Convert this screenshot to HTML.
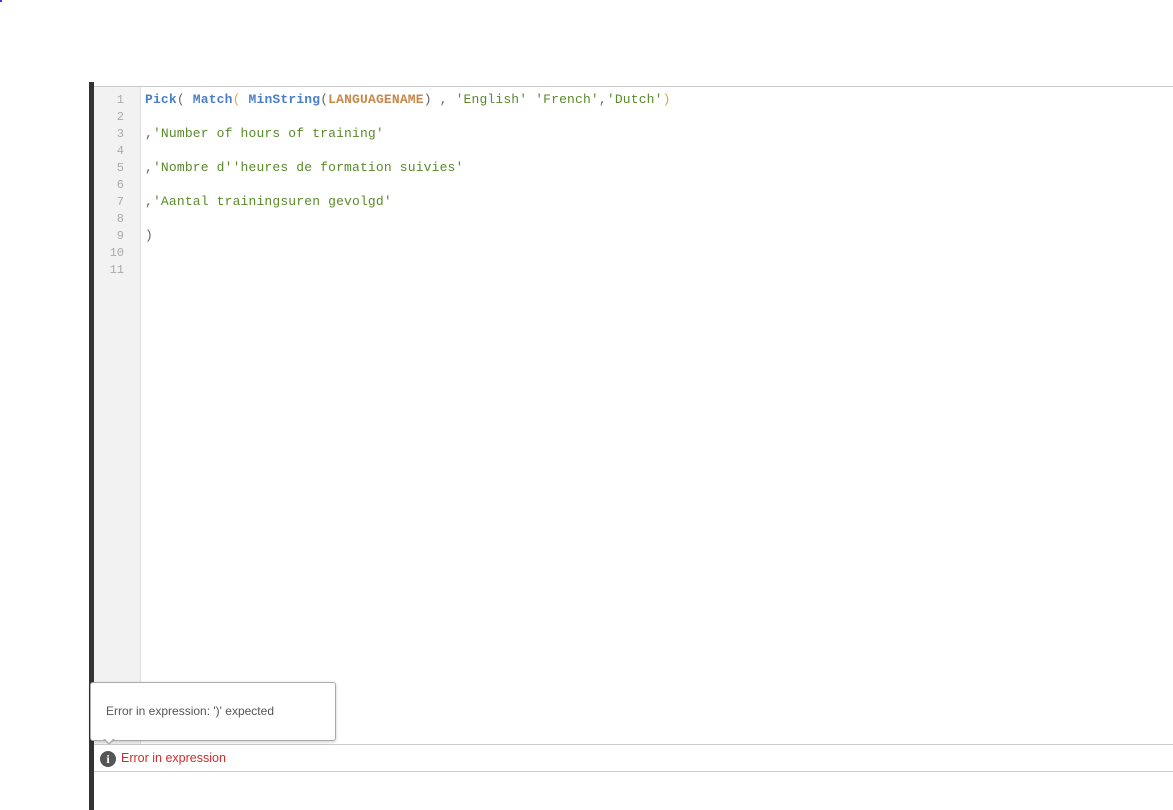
<!DOCTYPE html>
<html><head><style>
body{margin:0;width:1173px;height:810px;background:#fff;position:relative;overflow:hidden;font-family:"Liberation Sans",sans-serif}
.bar{position:absolute;left:89px;top:82px;width:5px;height:728px;background:#333}
.top{position:absolute;left:94px;top:86px;right:0;height:1px;background:#ccc}
.gut{position:absolute;left:94px;top:87px;width:46px;height:657px;background:#f2f2f2;border-right:1px solid #ddd}
.ln{position:absolute;left:94px;width:30px;text-align:right;font:12px "Liberation Mono",monospace;color:#aaa}
.code{position:absolute;left:145px;font:13px "Liberation Mono",monospace;letter-spacing:0.16px;white-space:pre;color:#5a8a2a}
.f{color:#4a7fc8;font-weight:bold}.p{color:#e8a14a}.v{color:#c8874a;font-weight:bold}.k{color:#666}
.tip{position:absolute;left:90px;top:682px;width:244px;height:57px;border:1px solid #aaa;border-radius:3px;background:#fff;box-shadow:0 1px 3px rgba(0,0,0,.2);font-size:12px;color:#555}
.bot{position:absolute;left:94px;top:744px;right:0;height:1px;background:#ccc}
.bot2{position:absolute;left:94px;top:771px;right:0;height:1px;background:#ccc}
.err{position:absolute;left:121px;top:751px;font-size:12.5px;color:#d42a2a}
.ic{position:absolute;left:100px;top:751px;width:16px;height:16px;border-radius:50%;background:#555;color:#fff;font:bold 12px "Liberation Serif",serif;text-align:center;line-height:16px}
</style></head><body>
<div style="position:absolute;left:0;top:0;width:2px;height:2px;background:#33f"></div>
<div class="top"></div>
<div class="gut"></div>
<div class="bar"></div>
<div class="ln" style="top:93px">1</div>
<div class="ln" style="top:110px">2</div>
<div class="ln" style="top:127px">3</div>
<div class="ln" style="top:144px">4</div>
<div class="ln" style="top:161px">5</div>
<div class="ln" style="top:178px">6</div>
<div class="ln" style="top:195px">7</div>
<div class="ln" style="top:212px">8</div>
<div class="ln" style="top:229px">9</div>
<div class="ln" style="top:246px">10</div>
<div class="ln" style="top:263px">11</div>
<div class="code" style="top:92px"><span class="f">Pick</span><span class="k">( </span><span class="f">Match</span><span class="p">( </span><span class="f">MinString</span><span class="k">(</span><span class="v">LANGUAGENAME</span><span class="k">) , </span>'English' 'French'<span class="k">,</span>'Dutch'<span class="p">)</span></div>
<div class="code" style="top:126px"><span class="k">,</span>'Number of hours of training'</div>
<div class="code" style="top:160px"><span class="k">,</span>'Nombre d''heures de formation suivies'</div>
<div class="code" style="top:194px"><span class="k">,</span>'Aantal trainingsuren gevolgd'</div>
<div class="code" style="top:228px"><span class="k">)</span></div>
<div class="bot"></div><div class="bot2"></div>
<div class="tip"><div style="position:absolute;left:15px;top:21px">Error in expression: ')' expected</div></div>
<div style="position:absolute;left:103px;top:739px;width:0;height:0;border-left:6px solid transparent;border-right:6px solid transparent;border-top:6px solid #aaa"></div>
<div style="position:absolute;left:104px;top:738px;width:0;height:0;border-left:5px solid transparent;border-right:5px solid transparent;border-top:5px solid #fff"></div>
<div class="ic">i</div>
<div class="err">Error in expression</div>
</body></html>
